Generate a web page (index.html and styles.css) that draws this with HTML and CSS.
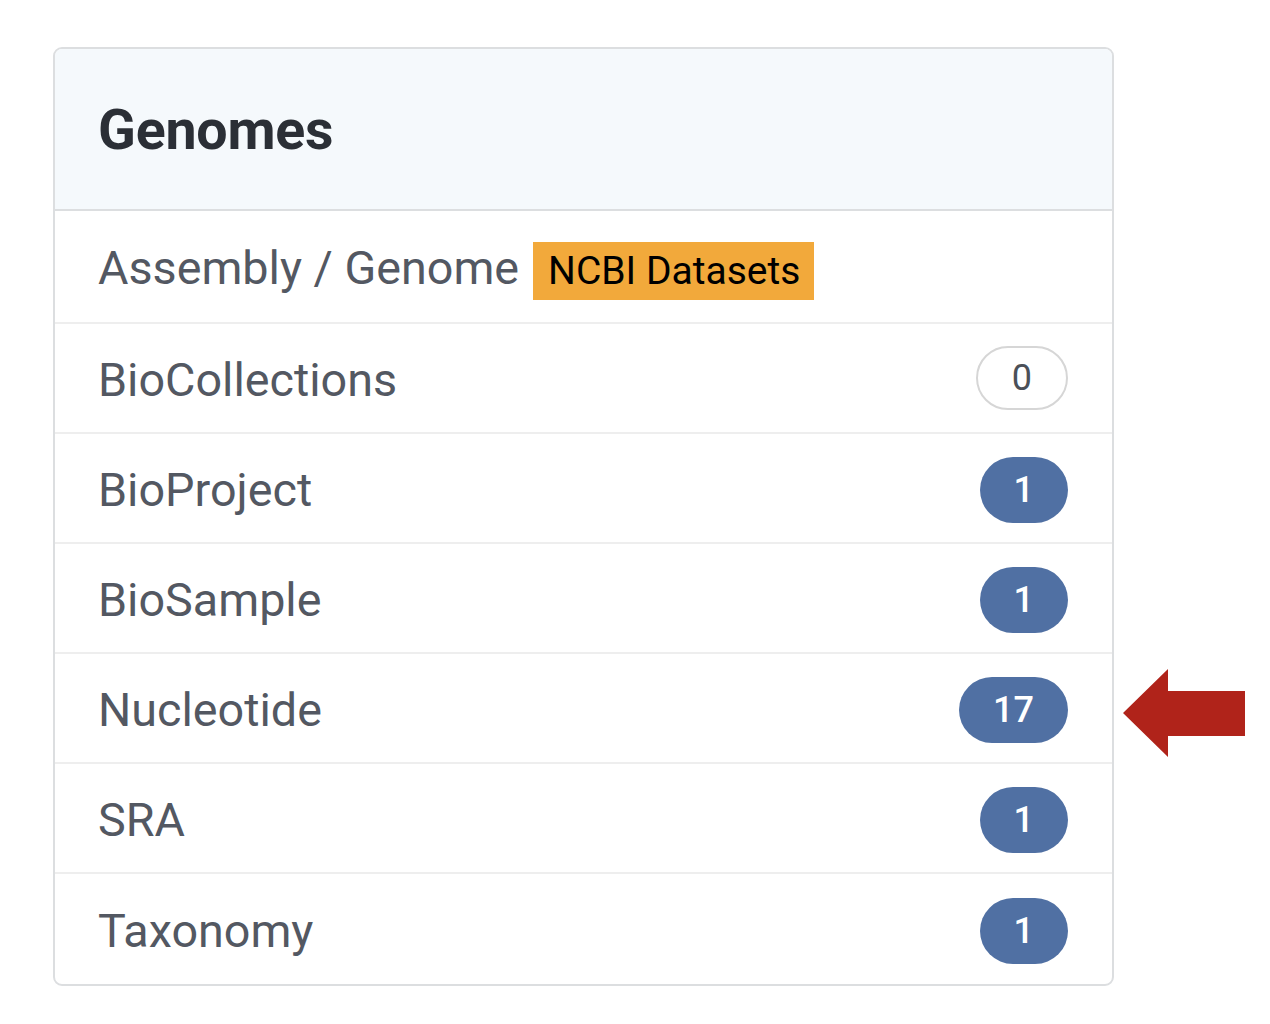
FILE: index.html
```html
<!DOCTYPE html>
<html lang="en">
<head>
<meta charset="utf-8">
<title>Genomes</title>
<link rel="stylesheet" href="styles.css">
</head>
<body>
<div class="page">
  <div class="card">
    <div class="card-header"><h2 class="title">Genomes</h2></div>
    <ul class="list">
      <li class="item first"><span class="label">Assembly / Genome</span><span class="tag">NCBI Datasets</span></li>
      <li class="item"><span class="label">BioCollections</span><span class="count empty">0</span></li>
      <li class="item"><span class="label">BioProject</span><span class="count">1</span></li>
      <li class="item"><span class="label">BioSample</span><span class="count">1</span></li>
      <li class="item"><span class="label">Nucleotide</span><span class="count">17</span></li>
      <li class="item"><span class="label">SRA</span><span class="count">1</span></li>
      <li class="item last"><span class="label">Taxonomy</span><span class="count">1</span></li>
    </ul>
  </div>
  <svg class="arrow" width="124" height="90" viewBox="0 0 124 90" aria-hidden="true">
    <polygon points="0,44 45,0 45,22 122,22 122,67 45,67 45,88" fill="#b0231a"/>
  </svg>
</div>
</body>
</html>
```

FILE: styles.css
```css
html, body {
  margin: 0;
  padding: 0;
  background: #ffffff;
}

body {
  font-family: Roboto, "Liberation Sans", Arial, sans-serif;
}

.page {
  position: relative;
  width: 1270px;
  height: 1024px;
  padding: 47px 0 0 53px;
  box-sizing: border-box;
}

.card {
  width: 1061px;
  box-sizing: border-box;
  border: 2px solid #dcdee0;
  border-radius: 9px;
  overflow: hidden;
  background: #ffffff;
}

.card-header {
  background: #f5f9fc;
  border-bottom: 2px solid #dcdee0;
  display: flex;
  align-items: center;
  padding: 2px 0 0 43px;
  height: 158px;
}

.title {
  margin: 0;
  font-size: 55.5px;
  font-weight: 700;
  color: #2b2f36;
  letter-spacing: -0.2px;
}

.list {
  list-style: none;
  margin: 0;
  padding: 0;
}

.item {
  display: flex;
  align-items: center;
  padding: 4px 44px 0 43px;
  border-top: 2px solid #eeeeee;
  height: 104px;
}

.item.first {
  border-top: none;
  height: 107px;
}

.item.last {
  height: 106px;
}

.label {
  flex: 1;
  font-size: 46.7px;
  color: #535862;
  line-height: 1;
}

.item.first .label {
  flex: 0 0 auto;
}

.tag {
  margin-left: 14px;
  margin-top: 4px;
  background: #f2a93b;
  color: #000000;
  font-size: 39px;
  height: 58px;
  line-height: 58px;
  padding: 0 14px 0 15px;
}

.count {
  display: inline-block;
  height: 66px;
  line-height: 66px;
  padding: 0 34px;
  border-radius: 33px;
  background: #5070a3;
  color: #ffffff;
  font-size: 36px;
  font-weight: 500;
}

.count.empty {
  background: #ffffff;
  color: #4b5058;
  border: 2px solid #d6d6d6;
  height: 60px;
  line-height: 60px;
  padding: 0 34px;
  margin-top: -4px;
  font-weight: 400;
}

.arrow {
  position: absolute;
  left: 1123px;
  top: 669px;
}
```
